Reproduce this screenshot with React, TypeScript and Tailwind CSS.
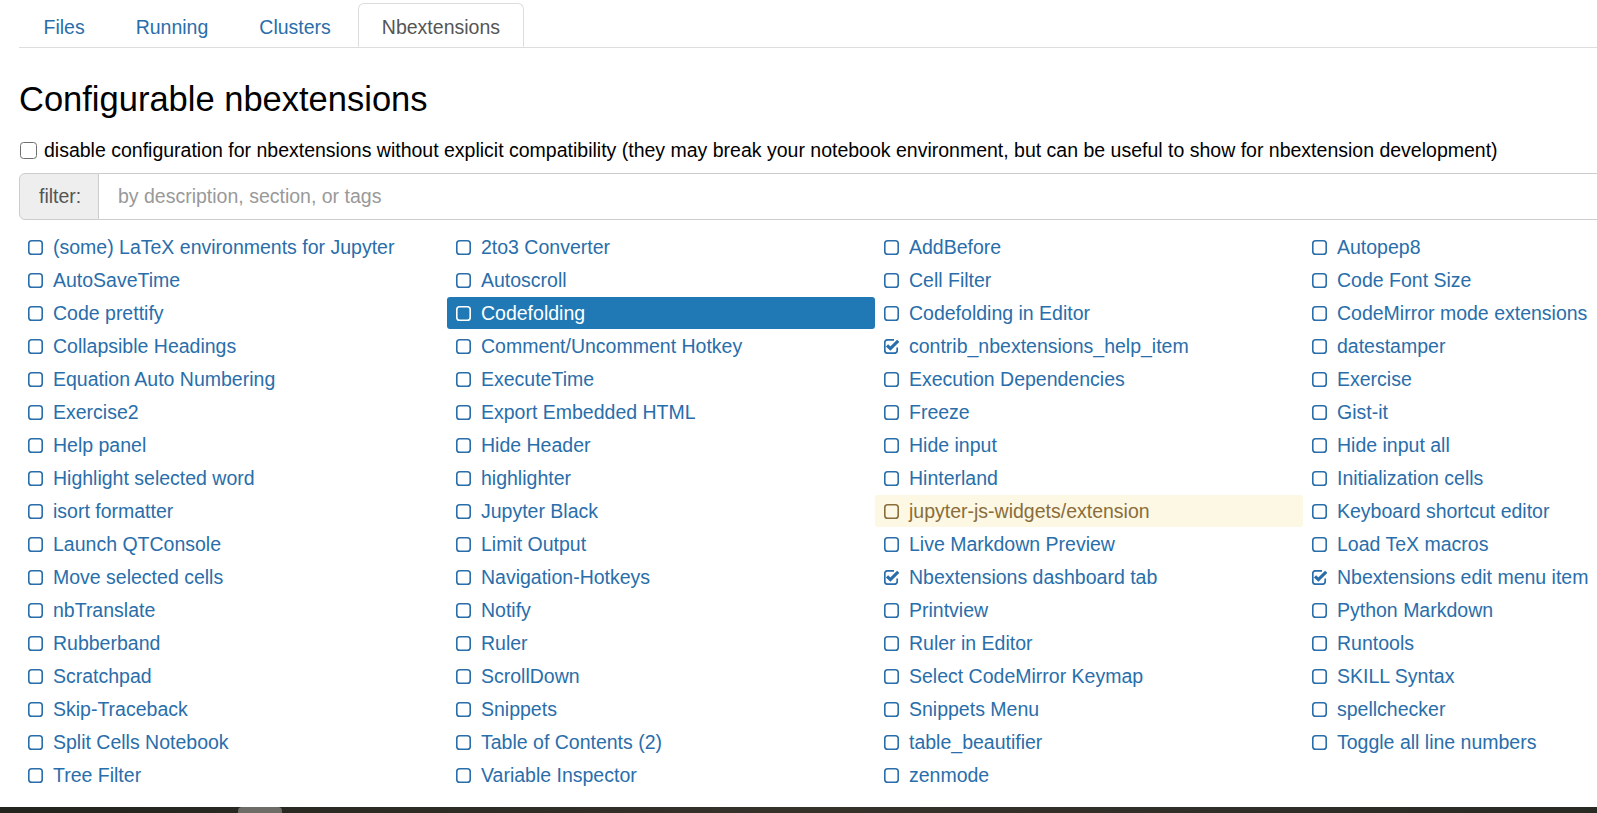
import React from "react";

type Ext = { name: string; checked?: boolean; active?: boolean; warn?: boolean };

const extensions: Ext[] = [
  { name: "(some) LaTeX environments for Jupyter" },
  { name: "2to3 Converter" },
  { name: "AddBefore" },
  { name: "Autopep8" },
  { name: "AutoSaveTime" },
  { name: "Autoscroll" },
  { name: "Cell Filter" },
  { name: "Code Font Size" },
  { name: "Code prettify" },
  { name: "Codefolding", active: true },
  { name: "Codefolding in Editor" },
  { name: "CodeMirror mode extensions" },
  { name: "Collapsible Headings" },
  { name: "Comment/Uncomment Hotkey" },
  { name: "contrib_nbextensions_help_item", checked: true },
  { name: "datestamper" },
  { name: "Equation Auto Numbering" },
  { name: "ExecuteTime" },
  { name: "Execution Dependencies" },
  { name: "Exercise" },
  { name: "Exercise2" },
  { name: "Export Embedded HTML" },
  { name: "Freeze" },
  { name: "Gist-it" },
  { name: "Help panel" },
  { name: "Hide Header" },
  { name: "Hide input" },
  { name: "Hide input all" },
  { name: "Highlight selected word" },
  { name: "highlighter" },
  { name: "Hinterland" },
  { name: "Initialization cells" },
  { name: "isort formatter" },
  { name: "Jupyter Black" },
  { name: "jupyter-js-widgets/extension", warn: true },
  { name: "Keyboard shortcut editor" },
  { name: "Launch QTConsole" },
  { name: "Limit Output" },
  { name: "Live Markdown Preview" },
  { name: "Load TeX macros" },
  { name: "Move selected cells" },
  { name: "Navigation-Hotkeys" },
  { name: "Nbextensions dashboard tab", checked: true },
  { name: "Nbextensions edit menu item", checked: true },
  { name: "nbTranslate" },
  { name: "Notify" },
  { name: "Printview" },
  { name: "Python Markdown" },
  { name: "Rubberband" },
  { name: "Ruler" },
  { name: "Ruler in Editor" },
  { name: "Runtools" },
  { name: "Scratchpad" },
  { name: "ScrollDown" },
  { name: "Select CodeMirror Keymap" },
  { name: "SKILL Syntax" },
  { name: "Skip-Traceback" },
  { name: "Snippets" },
  { name: "Snippets Menu" },
  { name: "spellchecker" },
  { name: "Split Cells Notebook" },
  { name: "Table of Contents (2)" },
  { name: "table_beautifier" },
  { name: "Toggle all line numbers" },
  { name: "Tree Filter" },
  { name: "Variable Inspector" },
  { name: "zenmode" },
];

const tabs = ["Files", "Running", "Clusters", "Nbextensions"];

// fa-square-o / fa-check-square-o lookalikes
const CheckIcon = ({ checked }: { checked?: boolean }) => (
  <svg width="15" height="15" viewBox="0 0 15 15" fill="none" stroke="currentColor" className="shrink-0">
    {checked ? (
      <>
        <path
          d="M13.2 8.4V11.6A2.6 2.6 0 0 1 10.6 14.2H3.4A2.6 2.6 0 0 1 0.8 11.6V3.4A2.6 2.6 0 0 1 3.4 0.8H10"
          strokeWidth="1.7"
        />
        <path d="M3 6.3L6.4 9.6L14.2 1.8" strokeWidth="3.2" />
      </>
    ) : (
      <rect x="0.8" y="0.8" width="13.4" height="13.4" rx="2.8" strokeWidth="1.6" />
    )}
  </svg>
);

const ExtItem = ({ ext }: { ext: Ext }) => {
  let tone = "text-[#296eaa]";
  if (ext.active) tone = "bg-[#2079b5] text-white";
  if (ext.warn) tone = "bg-[#fcf8e3] text-[#8a6d3b]";
  return (
    <div className={`h-[32px] flex items-center gap-[10px] pl-[9px] rounded-[3px] ${tone}`}>
      <CheckIcon checked={ext.checked} />
      <span className="whitespace-nowrap leading-[28px]">{ext.name}</span>
    </div>
  );
};

export default function App() {
  return (
    <div className="w-[1597px] h-[813px] overflow-hidden bg-white flex flex-col font-['Liberation_Sans',Arial,sans-serif] text-[19.5px] text-black">
      <div className="flex-1 pl-[19px]">
        {/* tabs */}
        <div className="pt-[3px] pl-px flex border-b border-[#dddddd]">
          {tabs.map((t) =>
            t === "Nbextensions" ? (
              <div
                key={t}
                className="h-[44px] -mb-px pt-[6px] px-[22.5px] mr-[6px] flex items-center bg-white border border-[#dddddd] border-b-white rounded-t-[6px] text-[#555555]"
              >
                {t}
              </div>
            ) : (
              <div key={t} className="h-[44px] pt-[6px] pl-[23.5px] pr-[22.5px] mr-[5px] flex items-center text-[#296eaa]">
                {t}
              </div>
            )
          )}
        </div>

        <h2 className="mt-[32px] text-[34.5px] leading-[38px] font-normal whitespace-nowrap">
          Configurable nbextensions
        </h2>

        <div className="mt-[18px] pl-px h-[28px] flex items-center gap-[7px] whitespace-nowrap">
          <span className="w-[17px] h-[17px] rounded-[3.5px] border-[1.5px] border-[#6f6f6f] bg-white shrink-0" />
          <span className="leading-[28px]">
            disable configuration for nbextensions without explicit compatibility (they may break your notebook
            environment, but can be useful to show for nbextension development)
          </span>
        </div>

        {/* filter */}
        <div className="mt-[9px] w-[1712px] h-[47px] flex">
          <div className="w-[80px] shrink-0 flex items-center pl-[19px] bg-[#eeeeee] border border-[#cccccc] rounded-l-[6px] text-[#555555]">
            filter:
          </div>
          <div className="flex-1 flex items-center pl-[19px] border border-l-0 border-[#cccccc] text-[#999999]">
            by description, section, or tags
          </div>
        </div>

        {/* extension list */}
        <div className="mt-[11px] w-[1712px] grid grid-cols-4 gap-y-px">
          {extensions.map((e) => (
            <ExtItem key={e.name} ext={e} />
          ))}
        </div>
      </div>

      {/* bottom strip of the desktop behind */}
      <div className="h-[6px] flex bg-gradient-to-r from-[#23241e] via-[#35322a] to-[#2a2a25]">
        <div className="ml-[238px] w-[44px] h-[6px] rounded-t-[4px] bg-[#6e6c66]" />
      </div>
    </div>
  );
}
